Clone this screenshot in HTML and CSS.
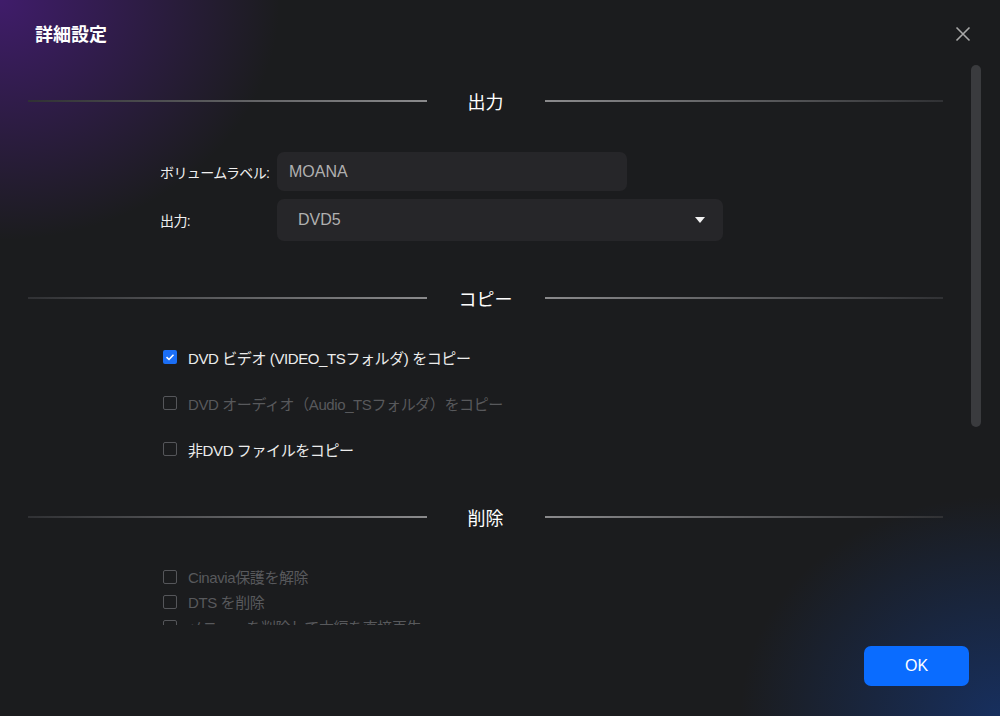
FILE: index.html
```html
<!DOCTYPE html>
<html>
  <head>
    <meta charset="utf-8">
    <link rel="stylesheet" href="styles.css">
  </head>
  <body>
    <div id="dialog">
      <div id="titlebar">
        <div id="title">詳細設定</div>
        <div id="close">
          <svg width="16" height="16" viewBox="0 0 16 16">
            <path d="M1.5 1.5 L14.5 14.5 M14.5 1.5 L1.5 14.5" stroke="#a8a8a8" stroke-width="1.6" fill="none"/>
          </svg>
        </div>
      </div>

      <div id="scroll-area">
        <div id="content">
          <div class="section-head first">
            <div class="line left"></div>
            <div class="section-title">出力</div>
            <div class="line right"></div>
          </div>

          <div id="output-form">
            <div class="form-row">
              <div class="label">ボリュームラベル:</div>
              <div class="text-input">MOANA</div>
            </div>
            <div class="form-row">
              <div class="label">出力:</div>
              <div class="select">
                <span>DVD5</span>
                <svg width="10" height="6" viewBox="0 0 10 6"><path d="M0 0 H10 L5 6 Z" fill="#f2f2f2"/></svg>
              </div>
            </div>
          </div>

          <div class="section-head copy">
            <div class="line left"></div>
            <div class="section-title">コピー</div>
            <div class="line right"></div>
          </div>

          <div class="options big">
            <div class="option">
              <span class="check checked">
                <svg width="14" height="14" viewBox="0 0 14 14"><path d="M3.5 7.2 L6 9.5 L10.5 4.8" stroke="#fff" stroke-width="1.6" fill="none"/></svg>
              </span>
              <span>DVD ビデオ (VIDEO_TSフォルダ) をコピー</span>
            </div>
            <div class="option disabled">
              <span class="check"></span>
              <span>DVD オーディオ（Audio_TSフォルダ）をコピー</span>
            </div>
            <div class="option">
              <span class="check"></span>
              <span>非DVD ファイルをコピー</span>
            </div>
          </div>

          <div class="section-head remove">
            <div class="line left"></div>
            <div class="section-title">削除</div>
            <div class="line right"></div>
          </div>

          <div class="options small">
            <div class="option disabled">
              <span class="check"></span>
              <span>Cinavia保護を解除</span>
            </div>
            <div class="option disabled">
              <span class="check"></span>
              <span>DTS を削除</span>
            </div>
            <div class="option disabled">
              <span class="check"></span>
              <span>メニューを削除して本編を直接再生</span>
            </div>
          </div>
        </div>
        <div id="scrollbar"><div id="thumb"></div></div>
      </div>

      <div id="footer">
        <button id="ok">OK</button>
      </div>
    </div>
  </body>
</html>
```

FILE: styles.css
```css
body {
  margin: 0;
  padding: 0;
  width: 1000px;
  height: 716px;
  overflow: hidden;
  font-family: "Liberation Sans", "Noto Sans CJK JP", sans-serif;
  color: #e8e8e8;
  background-color: #1b1c1e;
  background-image:
    radial-gradient(ellipse 280px 240px at 0 0, rgba(70, 28, 120, 0.85), rgba(70, 28, 120, 0) 100%),
    radial-gradient(ellipse 260px 220px at 100% 100%, rgba(22, 52, 110, 0.8), rgba(22, 52, 110, 0) 100%);
}

#dialog {
  display: flex;
  flex-direction: column;
  height: 716px;
}

#titlebar {
  display: flex;
  align-items: center;
  justify-content: space-between;
  height: 65px;
  padding: 0 29px 0 35px;
  box-sizing: border-box;
}

#title {
  font-size: 18px;
  font-weight: bold;
  color: #fff;
  margin-top: 1px;
}

#close {
  display: flex;
  margin-top: 3px;
}

#scroll-area {
  display: flex;
  height: 560px;
  overflow: hidden;
}

#content {
  width: 915px;
  margin-left: 28px;
}

#scrollbar {
  width: 10px;
  margin-left: 28px;
}

#thumb {
  height: 362px;
  background: #3a3b3e;
  border-radius: 5px;
}

.section-head {
  display: flex;
  align-items: center;
  height: 30px;
}

.section-head.first { margin-top: 21px; }
.section-head.copy { margin-top: 42px; }
.section-head.remove { margin-top: 30px; }

.line {
  flex: 1;
  height: 2px;
}

.line.left {
  background: linear-gradient(to right, #303134, #8a8a8c);
}

.line.right {
  background: linear-gradient(to right, #8a8a8c, #303134);
}

.section-title {
  width: 118px;
  text-align: center;
  font-size: 18px;
  color: #fff;
}

#output-form {
  display: flex;
  flex-direction: column;
  gap: 8px;
  margin-top: 36px;
  padding-left: 132px;
}

.form-row {
  display: flex;
  align-items: center;
}

.label {
  width: 117px;
  white-space: nowrap;
  font-size: 14px;
  letter-spacing: -0.6px;
  color: #f0f0f0;
}

.text-input {
  width: 350px;
  height: 39px;
  line-height: 39px;
  padding-left: 12px;
  box-sizing: border-box;
  background: #262629;
  border-radius: 7px;
  color: #b0b0b0;
  font-size: 16px;
}

.select {
  display: flex;
  align-items: center;
  justify-content: space-between;
  width: 446px;
  height: 42px;
  padding: 0 18px 0 21px;
  box-sizing: border-box;
  background: #262629;
  border-radius: 7px;
  color: #b0b0b0;
  font-size: 16px;
}

.options {
  display: flex;
  flex-direction: column;
  padding-left: 135px;
}

.options.big { margin-top: 21px; }
.options.big .option { height: 46px; }

.options.small { margin-top: 32px; }
.options.small .option { height: 25px; }

.option {
  display: flex;
  align-items: center;
  gap: 11px;
  font-size: 15px;
  letter-spacing: -0.4px;
  white-space: nowrap;
  color: #ececec;
}

.option.disabled {
  color: #58595c;
}

.check {
  display: flex;
  flex: none;
  width: 14px;
  height: 14px;
  box-sizing: border-box;
  border: 1px solid #55565a;
  border-radius: 2px;
}

.check.checked {
  border: none;
  background: #1b6ef5;
}

#footer {
  display: flex;
  justify-content: flex-end;
  padding: 21px 31px 0 0;
}

#ok {
  all: unset;
  width: 105px;
  height: 40px;
  text-align: center;
  line-height: 40px;
  background: #0a6cff;
  border-radius: 7px;
  color: #fff;
  font-family: "Liberation Sans", sans-serif;
  font-size: 16px;
  cursor: pointer;
}
```
